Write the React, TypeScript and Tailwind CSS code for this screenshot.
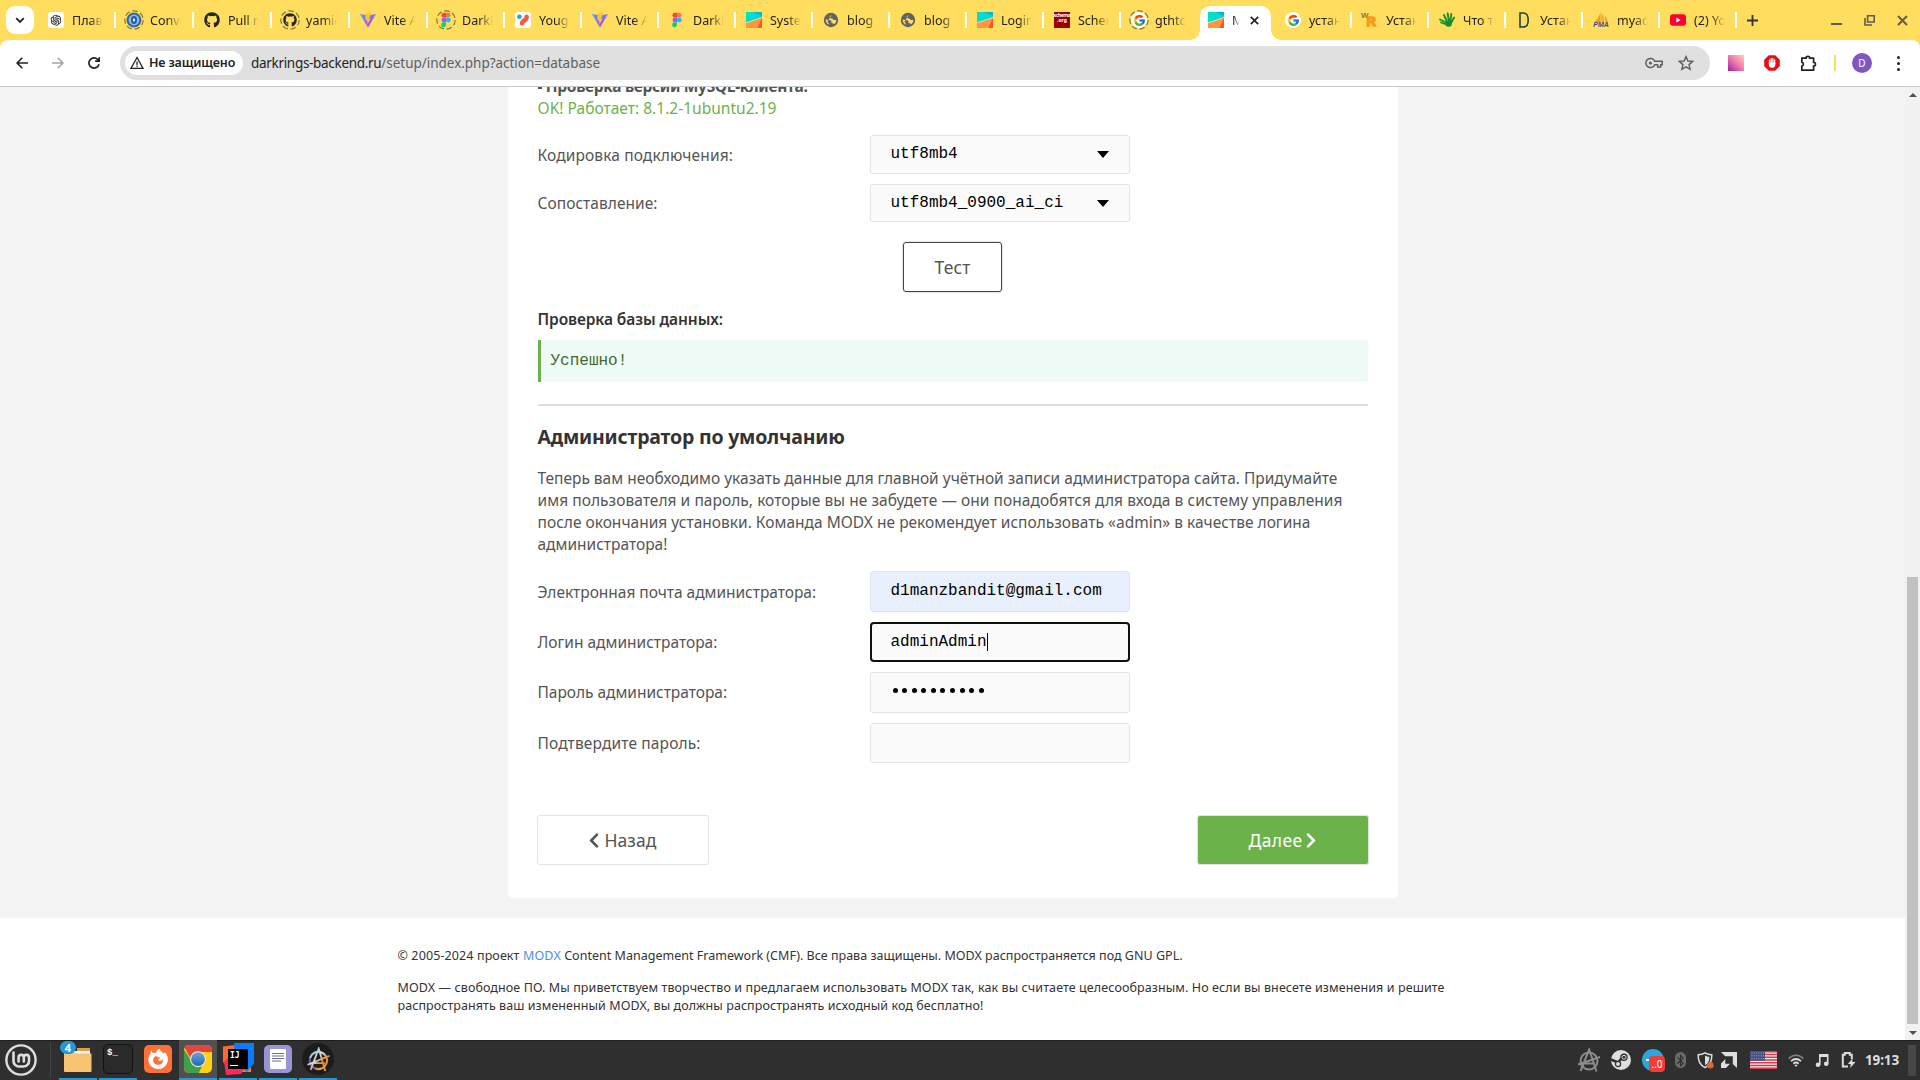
import React from 'react';
import type { ReactNode } from 'react';
import { AiOutlineOpenAI } from 'react-icons/ai';
import { FaBluetoothB, FaChevronLeft, FaChevronRight, FaGithub } from 'react-icons/fa';
import { FcGoogle } from 'react-icons/fc';

/* ---------- favicons ---------- */

function Ring({ children }: { children: ReactNode }) {
  return (
    <span className="relative flex size-4 items-center justify-center">
      {children}
      <svg className="absolute -inset-0.5 size-5" viewBox="0 0 20 20" fill="none" stroke="#8a7732" strokeWidth="1.2">
        <circle cx="10" cy="10" r="9.2" strokeDasharray="5.6 2.66" />
      </svg>
    </span>
  );
}

const ChatIcon = () => (
  <span className="flex size-4 items-center justify-center rounded-[3px] bg-white">
    <AiOutlineOpenAI className="size-3.5 text-[#222]" />
  </span>
);

const ConvIcon = () => (
  <svg className="size-4" viewBox="0 0 16 16">
    <circle cx="8" cy="8" r="7" fill="#2f6ab5" stroke="#1f4b8c" strokeWidth=".8" />
    <circle cx="8" cy="8" r="5.4" fill="#8db8e8" />
    <ellipse cx="8" cy="8" rx="3" ry="4" fill="#245ba6" />
    <ellipse cx="8" cy="8" rx="1.1" ry="1.8" fill="#e8f2ff" />
  </svg>
);

const ViteIcon = () => (
  <svg className="size-4" viewBox="0 0 16 16">
    <defs>
      <linearGradient id="vite" x1="0" y1="0" x2=".6" y2="1">
        <stop offset="0" stopColor="#41a5ff" />
        <stop offset="1" stopColor="#bd34fe" />
      </linearGradient>
    </defs>
    <path d="M0 2 8 15.6 16 2 8.2 3.4Z" fill="url(#vite)" />
    <path d="M11.4.4 5.6 1.6 5.2 7.9l1.7-.4-.5 2.3 1.4-.4-1 4.4 3.9-7.3-1.7.4.8-2.2Z" fill="#ffc820" />
  </svg>
);

const FigmaIcon = () => (
  <svg className="size-4" viewBox="0 0 16 16">
    <path d="M8 .8H5.9a2.4 2.4 0 0 0 0 4.8H8Z" fill="#f24e1e" />
    <path d="M8 .8h2.1a2.4 2.4 0 0 1 0 4.8H8Z" fill="#ff7262" />
    <path d="M8 5.6H5.9a2.4 2.4 0 0 0 0 4.8H8Z" fill="#a259ff" />
    <circle cx="10.3" cy="8" r="2.4" fill="#1abcfe" />
    <path d="M8 10.4H5.9A2.4 2.4 0 1 0 8 12.8Z" fill="#0acf83" />
  </svg>
);

const YougIcon = () => (
  <svg className="size-4" viewBox="0 0 16 16">
    <rect width="16" height="16" rx="3" fill="#fff" />
    <path d="M11.6 4.6q.3 2.400-1.600 3.400Q7.200 9.500 7 11.400" stroke="#fb5a3c" strokeWidth="4.400" strokeLinecap="round" strokeLinejoin="round" fill="none" />
    <circle cx="4.400" cy="4.800" r="2.300" fill="#19a7e0" />
  </svg>
);

const ModxIcon = () => (
  <svg className="size-4" viewBox="0 0 16 16">
    <path d="M0 0h16v5.600L0 10.800Z" fill="#00decc" />
    <path d="M7 0h9v4Z" fill="#00b5de" />
    <path d="M0 10.800 16 5.600V16H0Z" fill="#ff9640" />
    <path d="M16 5.600 11.400 16H16Z" fill="#ff5529" />
    <path d="M0 10.800 16 5.600" stroke="#fff" strokeOpacity=".7" strokeWidth=".7" />
  </svg>
);

const GlobeIcon = () => (
  <svg className="size-4" viewBox="0 0 16 16">
    <circle cx="8" cy="8" r="7.200" fill="#5f6368" />
    <path d="M9 2.200C8.500 3.600 7 3.400 6.700 4.700c-.3 1.100 1 1.600 2 1.700 1.500.2 1.400 1.700 2.800 1.600 1-.1 1.900-.3 1.900.5-.2 1.400-1 2.800-2.200 3.600-.6-.8-2.200-.4-2.600-1.200-.3-.8.200-1.800-.8-2.400C6.200 7.700 4.500 8.500 2.800 7.300c-.3 2.900 1.200 4.800 3.200 5.500-.3-1.400-.6-2-1.600-2.700" fill="#ffdd5e" />
  </svg>
);

const SchemaIcon = () => (
  <span className="flex size-4 flex-col items-center justify-center bg-[#990000] text-[5px] leading-[5px] font-bold text-white">
    <span className="-mt-1 tracking-[-0.4px]">schema</span>
    <span>.org</span>
  </span>
);

const GoogleIcon = () => (
  <span className="flex size-4 items-center justify-center rounded-full bg-white">
    <FcGoogle className="size-[13px]" />
  </span>
);

const WrIcon = () => (
  <span className="flex size-4 items-center font-['Liberation_Sans'] leading-none font-black text-[#f89a14]">
    <span className="-mt-2 -ml-px text-[8px] tracking-[-1px] text-[#8a7440]">W</span>
    <span className="mt-0.5 -ml-px text-[13px] tracking-[-1px] [-webkit-text-stroke:1.4px_#f89a14]">R</span>
  </span>
);

const HandIcon = () => (
  <svg className="size-4" viewBox="0 0 16 16" stroke="#12912b" strokeLinecap="round" fill="none">
    <path d="M8.600 11 5 3M10 10 8.700 1.500M11.300 10 12.300 2M12 11l3.200-5.500" strokeWidth="1.900" />
    <path d="M7 10.500 1 7.500M6 12 2 10.500" strokeWidth="1.800" />
    <path d="M9.300 11.700h.6" strokeWidth="6" />
  </svg>
);

const DIcon = () => (
  <svg className="size-4" viewBox="0 0 16 16">
    <path d="M4 .9h3.200Q12.200.9 12.200 8t-5 7.100H4Z" fill="none" stroke="#1b3a4b" strokeWidth="1.500" />
  </svg>
);

const PmaIcon = () => (
  <span className="relative flex size-4 items-end justify-center">
    <svg className="absolute inset-0 size-4" viewBox="0 0 16 16">
      <path d="M7.500 0v10H1.500Q6 6 7.500 0Z" fill="#f89c0e" />
      <path d="M8.500 1q3.500 4 2.500 9h-3ZM12 4q3.500 3 2.500 6.500H12Z" fill="#f7a93c" />
    </svg>
    <span className="relative font-['Liberation_Sans'] text-[7px] leading-[6px] font-black text-[#3a4a86] italic">PMA</span>
  </span>
);

const YouTubeIcon = () => (
  <svg className="size-4" viewBox="0 0 16 16">
    <rect x="0" y="2.300" width="16" height="11.400" rx="3" fill="#ff0033" />
    <path d="M6.400 5.600v4.800L10.600 8Z" fill="#fff" />
  </svg>
);

type Tab = { title: string; icon: ReactNode; active?: boolean; noSep?: boolean; wide?: boolean };

const tabs: Tab[] = [
  { title: 'Плав', icon: <ChatIcon />, wide: true },
  { title: 'Conve', icon: <Ring><ConvIcon /></Ring>, wide: true },
  { title: 'Pull re', icon: <FaGithub className="size-4 text-[#24292f]" />, wide: true },
  { title: 'yamic', icon: <Ring><FaGithub className="size-3.5 text-[#24292f]" /></Ring>, wide: true },
  { title: 'Vite A', icon: <ViteIcon />, wide: true },
  { title: 'DarkR', icon: <Ring><FigmaIcon /></Ring> },
  { title: 'Youg', icon: <YougIcon /> },
  { title: 'Vite A', icon: <ViteIcon /> },
  { title: 'DarkR', icon: <FigmaIcon /> },
  { title: 'Syste', icon: <ModxIcon /> },
  { title: 'blog', icon: <GlobeIcon /> },
  { title: 'blog', icon: <GlobeIcon /> },
  { title: 'Login', icon: <ModxIcon /> },
  { title: 'Scher', icon: <SchemaIcon /> },
  { title: 'gthtc', icon: <Ring><GoogleIcon /></Ring>, noSep: true },
  { title: 'M', icon: <ModxIcon />, active: true },
  { title: 'устан', icon: <GoogleIcon /> },
  { title: 'Устан', icon: <WrIcon /> },
  { title: 'Что т', icon: <HandIcon /> },
  { title: 'Устан', icon: <DIcon /> },
  { title: 'myad', icon: <PmaIcon /> },
  { title: '(2) Yo', icon: <YouTubeIcon /> },
];

function TabItem({ tab }: { tab: Tab }) {
  if (tab.active) {
    return (
      <div className="flex h-[34px] w-[77px] shrink-0 self-end pl-0.5">
        <div className="relative flex h-full w-[71px] items-center rounded-t-[10px] bg-white pb-1.5 pl-2">
          <span className="absolute bottom-0 -left-2.5 size-2.5 bg-[radial-gradient(circle_at_0_0,transparent_9.5px,white_10px)]" />
          <span className="absolute -right-2.5 bottom-0 size-2.5 bg-[radial-gradient(circle_at_100%_0,transparent_9.5px,white_10px)]" />
          {tab.icon}
          <span className="mt-0.5 ml-2 w-2 [mask-image:linear-gradient(to_right,#000_20%,transparent)]">{tab.title}</span>
          <svg className="ml-2.5 size-[9px]" viewBox="0 0 9 9" stroke="#222" strokeWidth="1.700">
            <path d="m.8.8 7.400 7.400M8.200.8.8 8.200" />
          </svg>
        </div>
      </div>
    );
  }
  return (
    <div className={`flex h-10 shrink-0 items-center pl-2.5 ${tab.wide ? 'w-[78px]' : 'w-[77px]'}`}>
      {tab.icon}
      <span className="mt-0.5 ml-2 w-8 whitespace-nowrap [mask-image:linear-gradient(to_right,#000_55%,transparent_97%)]">{tab.title}</span>
      <span className={tab.noSep ? 'hidden' : 'ml-auto h-4 w-0.5 bg-white'} />
    </div>
  );
}

function TabStrip() {
  return (
    <div className="flex h-10 items-center bg-[#ffdd5e] text-[12.5px] text-[#222]">
      <div className="ml-1.5 flex h-7 w-7 shrink-0 items-center justify-center rounded-[9px] bg-white">
        <svg className="size-2.5" viewBox="0 0 10 10" fill="none" stroke="#222" strokeWidth="1.800">
          <path d="m1.200 3.200 3.800 3.800 3.800-3.800" />
        </svg>
      </div>
      <div className="ml-1 flex shrink-0">
        {tabs.map((t, i) => (
          <TabItem key={i} tab={t} />
        ))}
      </div>
      <svg className="ml-[10px] size-[11px] shrink-0" viewBox="0 0 11 11" stroke="#333" strokeWidth="1.800">
        <path d="M5.500 0v11M0 5.500h11" />
      </svg>
      <div className="mr-3 ml-auto flex items-center gap-[22px]">
        <span className="mt-2 h-0.5 w-[11px] bg-[#5c5c5c]" />
        <svg className="size-[11px]" viewBox="0 0 11 11" fill="none" stroke="#5c5c5c" strokeWidth="1.600">
          <path d="M3.600.8h6.600v6.200H3.600ZM1 3v7h7" />
        </svg>
        <svg className="size-[11px]" viewBox="0 0 11 11" stroke="#5c5c5c" strokeWidth="2">
          <path d="m1 1 9 9M10 1l-9 9" />
        </svg>
      </div>
    </div>
  );
}

/* ---------- toolbar ---------- */

function Toolbar() {
  return (
    <div className="h-[47px] bg-[#ffdd5e]">
      <div className="flex h-[47px] items-center rounded-t-lg border-b border-[#c9c9c9] bg-white">
        <svg className="ml-4 size-3 shrink-0" viewBox="0 0 12 12" fill="none" stroke="#222" strokeWidth="1.600">
          <path d="M12 6H1M6.300.8 1.100 6l5.200 5.200" />
        </svg>
        <svg className="ml-6 size-3 shrink-0" viewBox="0 0 12 12" fill="none" stroke="#a5a5a5" strokeWidth="1.600">
          <path d="M0 6h11M5.700.8 10.900 6l-5.200 5.200" />
        </svg>
        <svg className="ml-6 size-3 shrink-0" viewBox="0 0 12 12" fill="none" stroke="#222" strokeWidth="1.700">
          <path d="M11 7.200A5.100 5.100 0 1 1 9.800 2.500l1.100 1.100M11.200.2v4H7.200" />
        </svg>
        <div className="ml-5 flex h-[34px] w-[1590px] shrink-0 items-center rounded-full bg-[#e0e0e0] pr-4 pl-[5px]">
          <div className="flex h-6 w-[118px] items-center rounded-full bg-white pl-[5px]">
            <svg className="size-3.5" viewBox="0 0 14 14" fill="none" stroke="#222" strokeWidth="1.300">
              <path d="M7 1.500.9 12.400h12.200ZM7 5.500v3.400M7 9.800v1.300" />
            </svg>
            <span className="mt-px ml-[5px] text-[12.5px] font-semibold tracking-[-0.15px] whitespace-nowrap text-[#222]">Не защищено</span>
          </div>
          <span className="ml-2 text-[13.5px] tracking-[-0.31px] whitespace-nowrap text-[#222]">darkrings-backend.ru</span>
          <span className="text-[13.5px] tracking-[-0.03px] whitespace-nowrap text-[#5e5e5e]">/setup/index.php?action=database</span>
          <svg className="ml-auto h-3 w-[18px]" viewBox="0 0 18 12" fill="none" stroke="#5f5f5f" strokeWidth="1.500">
            <path d="M9.700 4.300A4.600 4.600 0 1 0 9.700 7.700h3v2.200h3V7.700h1.500V4.300Z" />
            <circle cx="5.400" cy="6" r="1.600" fill="#5f5f5f" stroke="none" />
          </svg>
          <svg className="ml-[15px] size-4" viewBox="0 0 16 16" fill="none" stroke="#5f5f5f" strokeWidth="1.400">
            <path d="m8 1.600 1.900 4.400 4.800.4-3.700 3.200 1.200 4.700L8 11.800l-4.200 2.500L5 9.600 1.300 6.400l4.800-.4Z" />
          </svg>
        </div>
        <span className="ml-[18px] size-4 bg-[linear-gradient(45deg,#9b1fb0,#f07aa8_50%,#ffd0c0)]" />
        <svg className="ml-5 size-4" viewBox="0 0 16 16">
          <path d="M4.800.2h6.400L15.800 4.800v6.400l-4.600 4.600H4.800L.2 11.200V4.800Z" fill="#e60f14" />
          <path d="M5.500 9V5.200M7.200 8V3.600M8.900 8V3.600M10.600 9V5" stroke="#fff" strokeWidth="1.300" strokeLinecap="round" />
          <path d="M4.900 7.500h6.400v2.300q0 3-3.200 3t-3.200-3Z" fill="#fff" />
        </svg>
        <svg className="ml-5 size-[17px]" viewBox="0 0 17 17" fill="none" stroke="#222" strokeWidth="1.700" strokeLinejoin="round">
          <path d="M1.800 3.200h4.400a1.800 1.400 0 1 1 3.400 0h4v4.300a1.400 1.800 0 1 1 0 3.400v4.300H1.800v-4.100a2 2 0 0 0 0-3.900Z" />
        </svg>
        <span className="ml-[17px] h-4 w-0.5 bg-[#ffdd5e]" />
        <span className="ml-[16px] flex size-5 items-center justify-center rounded-full bg-[#7e57c2] text-[10px] text-white">D</span>
        <span className="ml-[25px] flex flex-col gap-[3px]">
          <span className="size-[3px] rounded-full bg-[#222]" />
          <span className="size-[3px] rounded-full bg-[#222]" />
          <span className="size-[3px] rounded-full bg-[#222]" />
        </span>
      </div>
    </div>
  );
}

/* ---------- page ---------- */

function SelectBox({ value, height }: { value: string; height: string }) {
  return (
    <div className={`flex w-[260px] items-center rounded-[3px] border border-[#e4e4e4] bg-[#fbfbfb] px-5 ${height}`}>
      <span className="font-['Liberation_Mono'] text-base text-black">{value}</span>
      <svg className="ml-auto h-[7px] w-3" viewBox="0 0 12 7">
        <path d="M0 0h12L6 7Z" fill="#000" />
      </svg>
    </div>
  );
}

function Row({ label, tracking, children }: { label: string; tracking: string; children: ReactNode }) {
  return (
    <div className="flex items-center">
      <label className={`w-[332px] ${tracking}`}>{label}</label>
      {children}
    </div>
  );
}

const inputBase = "flex w-[260px] items-center rounded-[3px] border pl-5 pb-px font-['Liberation_Mono'] text-base text-black";

function Panel() {
  return (
    <div className="mx-auto h-[823px] w-[890px] rounded-b-[5px] bg-white px-[30px] text-[15.5px] leading-[22px] text-[#555]">
      <div className="-mt-3">
        <p className="font-bold tracking-[-0.32px]">- Проверка версии MySQL-клиента:</p>
        <p className="tracking-[0.02px] text-[#6cb24a]">OK! Работает: 8.1.2-1ubuntu2.19</p>
      </div>
      <div className="mt-4 flex flex-col gap-2.5">
        <Row label="Кодировка подключения:" tracking="tracking-[0.126px]">
          <SelectBox value="utf8mb4" height="h-[39px] pb-px" />
        </Row>
        <Row label="Сопоставление:" tracking="tracking-[0.04px]">
          <SelectBox value="utf8mb4_0900_ai_ci" height="h-[38px]" />
        </Row>
      </div>
      <button className="mx-auto mt-5 flex h-[50px] w-[99px] items-center justify-center rounded-[3px] border border-[#444] text-[17.5px] tracking-[0.14px] text-[#555] shadow-[0_0_1px_1px_#e4e4e4]">
        Тест
      </button>
      <p className="mt-4 font-semibold tracking-[-0.09px] text-[#333]">Проверка базы данных:</p>
      <div className="mt-2.5 flex h-[42px] items-center border-l-[3px] border-[#6cb24a] bg-[#eefbf6] pb-px pl-2.5 font-['Liberation_Mono'] text-base text-[#3f6a2b]">
        Успешно!
      </div>
      <div className="mt-[22px] h-0.5 bg-[#ddd]" />
      <h2 className="mt-[18px] text-[19.5px] leading-[26px] font-bold tracking-[-0.21px] text-[#333]">Администратор по умолчанию</h2>
      <p className="mt-[17px] whitespace-nowrap">
        Теперь вам необходимо указать данные для главной учётной записи администратора сайта. Придумайте
        <br />
        <span className="tracking-[0.049px]">имя пользователя и пароль, которые вы не забудете — они понадобятся для входа в систему управления</span>
        <br />
        <span className="tracking-[0.013px]">после окончания установки. Команда MODX не рекомендует использовать «admin» в качестве логина</span>
        <br />
        администратора!
      </p>
      <div className="mt-4 flex flex-col gap-2.5">
        <Row label="Электронная почта администратора:" tracking="tracking-[-0.03px]">
          <div className={`${inputBase} h-[41px] border-[#dfe3ea] bg-[#e8f0fe]`}>d1manzbandit@gmail.com</div>
        </Row>
        <Row label="Логин администратора:" tracking="tracking-normal">
          <div className="flex h-10 w-[260px] items-center rounded-[4px] border-2 border-[#101010] bg-[#fbfbfb] pl-[19px] font-['Liberation_Mono'] text-base text-black">
            adminAdmin
            <span className="h-[18px] w-px bg-black" />
          </div>
        </Row>
        <Row label="Пароль администратора:" tracking="tracking-[-0.026px] pb-px">
          <div className={`${inputBase} h-[41px] gap-[4.6px] border-[#e4e4e4] bg-[#fbfbfb] !pb-[4px] !pl-[22px]`}>
            {Array.from({ length: 10 }, (_, i) => (
              <span key={i} className="size-[5px] rounded-full bg-black" />
            ))}
          </div>
        </Row>
        <Row label="Подтвердите пароль:" tracking="tracking-[0.148px]">
          <div className={`${inputBase} h-10 border-[#e4e4e4] bg-[#fbfbfb]`} />
        </Row>
      </div>
      <div className="mt-[52px] -mr-px -ml-px flex justify-between text-[17.5px]">
        <button className="flex h-[50px] w-[172px] items-center justify-center rounded-[3px] border border-[#e4e4e4] text-[#555]">
          <FaChevronLeft className="mr-1 h-[17px] w-[12px]" />
          <span className="tracking-[0.1px]">Назад</span>
        </button>
        <button className="flex h-[50px] w-[172px] items-center justify-center rounded-[3px] border border-[#dfe3dc] bg-[#6cb24a] pl-px text-white">
          <span className="tracking-[0.35px]">Далее</span>
          <FaChevronRight className="ml-[3px] h-[17px] w-[12px]" />
        </button>
      </div>
    </div>
  );
}

function Footer() {
  return (
    <div className="h-[122px] bg-white pt-[29px] pl-[397.5px] text-[12.5px] leading-[18px] whitespace-nowrap text-[#333]">
      <p>
        <span className="tracking-[0.11px]">© 2005-2024 проект </span>
        <a className="tracking-[0.17px] text-[#4a90e2]">MODX</a>
        <span className="tracking-[0.018px]"> Content Management Framework (CMF). Все права защищены. MODX распространяется под GNU GPL.</span>
      </p>
      <p className="mt-[14px] tracking-[0.096px]">
        MODX — свободное ПО. Мы приветствуем творчество и предлагаем использовать MODX так, как вы считаете целесообразным. Но если вы внесете изменения и решите
      </p>
      <p className="tracking-[0.065px]">распространять ваш измененный MODX, вы должны распространять исходный код бесплатно!</p>
    </div>
  );
}

function Scrollbar() {
  return (
    <div className="flex w-[15px] shrink-0 flex-col items-center bg-[#f1f1f1]">
      <svg className="mt-1.5 h-1 w-2" viewBox="0 0 8 4"><path d="M0 4h8L4 0Z" fill="#505050" /></svg>
      <div className="mt-auto h-[447px] w-[11px] bg-[#c1c1c1]" />
      <svg className="mt-[7px] mb-[5px] h-1 w-2" viewBox="0 0 8 4"><path d="M0 0h8L4 4Z" fill="#505050" /></svg>
    </div>
  );
}

/* ---------- taskbar ---------- */

function MintIcon() {
  return (
    <svg className="size-8" viewBox="0 0 32 32" fill="none" stroke="#dedede" strokeWidth="2.600" strokeLinecap="round">
      <circle cx="16" cy="16" r="14.600" strokeWidth="2.400" />
      <path d="M8.500 8.500v8.500a5.500 5.500 0 0 0 5.500 5.500h4.500A5.500 5.500 0 0 0 24 17v-3.500a2.600 2.600 0 0 0-5.200 0v4M18.800 17.500v-4a2.600 2.600 0 0 0-5.200 0v4" />
    </svg>
  );
}

function FolderIcon() {
  return (
    <span className="relative">
      <svg className="h-7 w-[30px]" viewBox="0 0 30 28">
        <path d="M14 3h13v6H14Z" fill="#d9a04e" />
        <path d="M3 6h24v5H3Z" fill="#f5f5f5" />
        <path d="M1 5h9l2 3.500h16.500V26q0 1-1 1H2q-1 0-1-1Z" fill="#f8c471" />
      </svg>
      <span className="absolute -top-[4px] -left-[3px] flex h-[13px] w-4 items-center justify-center rounded-full bg-[#2598d6] text-[11px] leading-none font-bold text-white">4</span>
    </span>
  );
}

function TerminalIcon() {
  return (
    <span className="flex size-[30px] rounded-[5px] border border-[#111] bg-[#2a2a2a] pt-1 pl-[3px] font-['Liberation_Mono'] text-[9px] leading-none font-bold text-white">
      $_
    </span>
  );
}

function FirefoxIcon() {
  return (
    <svg className="size-7" viewBox="0 0 28 28">
      <rect width="28" height="28" rx="5" fill="#ff7139" />
      <path d="M7.500 5.500q.3 1.800 1.500 2.600 1.600-.6 3 .2c-.2-2 1.600-4.200 4-4.600-.6 2.400 3 3.300 4.300 5.300.2-.7.200-1.300 0-2 3.200 2.600 4 6 3.400 9.200-.9 4.400-4.600 7.800-9.500 7.800-5.600 0-9.800-4.200-9.800-9.400 0-2.600.9-4.500 2.200-6 .1-1.200.3-2.200.9-3.100Z" fill="#fff" />
      <path d="M10 12.500q1.500-1.700 3.500-.9.600.8 2.600.9c0 1.400-2 1.200-2.300 2.600 1.300 1.500 4 .6 5-.9.800 3.600-1.600 5.600-4.600 5.600S9 17.400 9.100 14.900q.2-1.400.9-2.400Z" fill="#ff7139" />
    </svg>
  );
}

function ChromeIcon() {
  return (
    <svg className="size-7" viewBox="0 0 28 28">
      <defs>
        <clipPath id="cr"><rect width="28" height="28" rx="5" /></clipPath>
        <linearGradient id="cb" x1="0" y1="0" x2="0" y2="1"><stop stopColor="#6aa5e0" /><stop offset="1" stopColor="#2468a8" /></linearGradient>
      </defs>
      <g clipPath="url(#cr)">
        <path d="M0 0h28v28H0Z" fill="#ffd013" />
        <path d="M-2-2h32v9H14L8 16Z" fill="#e2453c" />
        <path d="M-1 3 8 17l10 4.500-4 8H-2Z" fill="#3fa049" />
      </g>
      <circle cx="14" cy="14.200" r="8" fill="#e8e8e8" />
      <circle cx="14" cy="14.200" r="6.900" fill="url(#cb)" />
    </svg>
  );
}

function IdeaIcon() {
  return (
    <span className="relative flex size-8 items-center justify-center">
      <svg className="absolute inset-0 size-8" viewBox="0 0 32 32">
        <path d="M1 3.500 13 2l6 14-7 13L1 19Z" fill="#fb6b2f" />
        <path d="M16 24h13v5H17Z" fill="#fc801d" />
        <path d="M12 0h20v20l-7 9-12-9Z" fill="#087cfa" />
        <path d="M2 19 13 8l9 18-3 5L4 32Z" fill="#fe2857" />
      </svg>
      <span className="relative flex size-5 flex-col bg-black pt-[3px] pl-[2px] font-['DejaVu_Sans_Mono'] text-[8px] leading-[8px] font-bold text-white">
        IJ
        <span className="mt-[5px] h-px w-2 bg-white" />
      </span>
    </span>
  );
}

function NotesIcon() {
  return (
    <svg className="size-7" viewBox="0 0 28 28">
      <rect width="28" height="28" rx="5" fill="#9a94d8" />
      <rect x="6" y="4" width="16" height="20" rx="1" fill="#fff" />
      <path d="M8 8.500h12M8 11h12M8 13.500h12M8 16h9" stroke="#6d6a94" />
    </svg>
  );
}

function AMark({ className, stroke }: { className: string; stroke: string }) {
  return (
    <svg className={className} viewBox="0 0 24 24" fill="none" stroke={stroke} strokeWidth="2">
      <circle cx="12" cy="13" r="8.500" />
      <path d="m3.500 23 8.700-21.500L19.500 23.500M1 16.500l22-7.500M7 15.500h11" />
    </svg>
  );
}

function AnarchyIcon() {
  return (
    <span className="flex size-8 items-center justify-center rounded-full bg-[#1c1c1c]">
      <svg className="size-[25px]" viewBox="0 0 24 24" fill="none" strokeWidth="2">
        <defs>
          <linearGradient id="an" gradientUnits="userSpaceOnUse" x1="3" y1="3" x2="21" y2="21">
            <stop offset=".1" stopColor="#7fc4d8" />
            <stop offset=".4" stopColor="#d5e2e6" />
            <stop offset=".65" stopColor="#e6923c" />
            <stop offset="1" stopColor="#e8a04a" />
          </linearGradient>
        </defs>
        <path d="M3.900 10.500A8.300 8.300 0 0 0 9 20.700" stroke="#6a5fb8" />
        <path d="M9 20.700A8.300 8.300 0 1 0 3.900 10.500" stroke="url(#an)" />
        <path d="m4.500 22 7.700-20.500L18.500 23M1.500 17 22.500 8.500M7 15.500h11" stroke="url(#an)" strokeWidth="1.700" />
      </svg>
    </span>
  );
}

function TaskItem({ children, running = true, active = false }: { children: ReactNode; running?: boolean; active?: boolean }) {
  return (
    <div className={`flex h-full w-[38px] flex-col items-center ${active ? 'bg-[#505050]' : ''}`}>
      <div className="flex flex-1 items-center">{children}</div>
      <div className={`h-0.5 w-full ${running ? 'bg-[#2598d6]' : 'bg-transparent'}`} />
    </div>
  );
}

function Flag() {
  return (
    <svg className="h-[18px] w-[27px]" viewBox="0 0 27 18">
      <rect width="27" height="18" fill="#f1efef" />
      <path d="M0 .7h27M0 3.500h27M0 6.300h27M0 9h27M0 11.800h27M0 14.500h27M0 17.300h27" stroke="#cf3b4a" strokeWidth="1.400" />
      <rect width="15" height="9.700" fill="#46517f" />
      <path d="M1.500 2h13M1.500 4.800h13M1.500 7.600h13" stroke="#a9b0cb" strokeWidth=".9" strokeDasharray="1 1.300" />
    </svg>
  );
}

function Taskbar() {
  return (
    <div className="flex h-10 items-center bg-[#2f2f2f] shadow-[inset_0_1px_0_#1f1f1f]">
      <span className="ml-[5px]"><MintIcon /></span>
      <span className="ml-[13px] h-9 w-px bg-[#454545]" />
      <div className="ml-2 flex h-full gap-0.5">
        <TaskItem><FolderIcon /></TaskItem>
        <TaskItem><TerminalIcon /></TaskItem>
        <TaskItem running={false}><FirefoxIcon /></TaskItem>
        <TaskItem active><ChromeIcon /></TaskItem>
        <TaskItem><IdeaIcon /></TaskItem>
        <TaskItem><NotesIcon /></TaskItem>
        <TaskItem><AnarchyIcon /></TaskItem>
      </div>
      <div className="mr-1 ml-auto flex items-center">
        <AMark className="size-6" stroke="#8b8b8b" />
        <svg className="ml-[10px] size-5" viewBox="0 0 20 20">
          <circle cx="10" cy="10" r="10" fill="#dedede" />
          <path d="M0 9.500 7 12.500 11 8" fill="none" stroke="#2f2f2f" strokeWidth="2.600" />
          <circle cx="7" cy="14" r="2.600" fill="#dedede" stroke="#2f2f2f" strokeWidth="1.300" />
          <circle cx="13" cy="7.300" r="3.700" fill="#2f2f2f" />
          <circle cx="13" cy="7.300" r="2" fill="none" stroke="#dedede" strokeWidth="1" />
        </svg>
        <span className="relative ml-[11px] size-[22px] rounded-full bg-[#2ca5e0]">
          <span className="absolute top-2.5 left-1 h-0.5 w-1 bg-white" />
          <span className="absolute top-[7px] left-[7px] flex h-4 w-4 items-center justify-center rounded-[4px] bg-[#f43b34] text-[10px] leading-none text-white">..0</span>
        </span>
        <span className="ml-[11px] flex h-4 w-[11px] items-center justify-center rounded-full bg-[#6b6b6b]">
          <FaBluetoothB className="size-[13px] text-[#2f2f2f]" />
        </span>
        <svg className="ml-[11px] size-[17px]" viewBox="0 0 17 17">
          <path d="M8 .9Q11 2.800 14.800 2.800 15.200 12 8 15.700.8 12 1.200 2.800 5 2.800 8 .9Z" fill="none" stroke="#dedede" strokeWidth="1.500" />
          <path d="M8 3.500q1.800 1.200 4.500 1.400Q12.500 10.500 8 13.200Z" fill="#dedede" />
          <circle cx="13.300" cy="13.300" r="3.300" fill="#dc6a33" />
        </svg>
        <svg className="ml-[7px] size-4" viewBox="0 0 16 16" fill="#dedede">
          <path d="M0 0h16v16l-4.200-4V4.200H4.200Z" />
          <path d="M0 11.500 4.300 7v4.700H9L5 16H0Z" />
        </svg>
        <span className="ml-[13px]"><Flag /></span>
        <svg className="ml-[11px] h-[13px] w-4" viewBox="0 0 16 13" fill="none" strokeWidth="1.700">
          <path d="M.6 4.500q7.400-6.600 14.800 0" stroke="#808080" />
          <path d="M3 7.200q5-4.400 10 0M5.300 9.700q2.700-2.400 5.400 0" stroke="#dedede" />
          <path d="M6.300 10.800h3.400L8 13Z" fill="#dedede" />
        </svg>
        <svg className="ml-[11px] h-3.5 w-[14px]" viewBox="0 0 14 14" fill="#dedede">
          <path d="M4 1h9.500v9.500h-1.600V4H5.600v8H4Z" />
          <circle cx="3" cy="11.700" r="2.300" />
          <circle cx="11.200" cy="10.700" r="2.300" />
        </svg>
        <svg className="ml-3 h-4 w-[15px]" viewBox="0 0 15 16">
          <path d="M7 14.500H1.800V2.800h2V1h5v1.800h2V7" fill="none" stroke="#dedede" strokeWidth="2" />
          <path d="M11.500 6.500 6.800 12h3l-.7 4L14.500 10h-3.200Z" fill="#dedede" />
        </svg>
        <span className="ml-[9px] text-[13.5px] font-bold tracking-[-0.14px] text-[#dedede]">19:13</span>
        <span className="ml-[9px] h-[31px] w-2 bg-[#474747]" />
      </div>
    </div>
  );
}

export default function App() {
  return (
    <div className="flex h-[1080px] w-[1920px] flex-col overflow-hidden font-['Noto_Sans','Open_Sans',sans-serif]">
      <TabStrip />
      <Toolbar />
      <div className="flex h-[953px] overflow-hidden">
        <div className="flex flex-1 flex-col overflow-hidden bg-[#f3f3f3]">
          <div className="h-[831px] overflow-hidden">
            <Panel />
          </div>
          <Footer />
        </div>
        <Scrollbar />
      </div>
      <Taskbar />
    </div>
  );
}
